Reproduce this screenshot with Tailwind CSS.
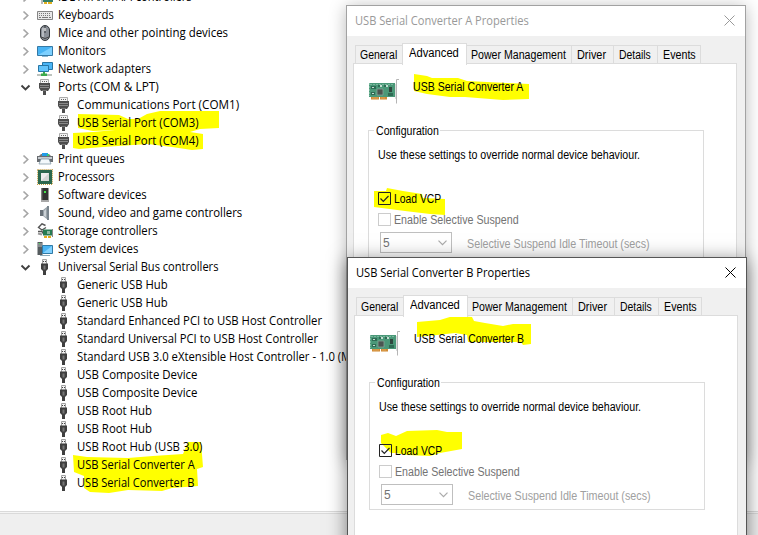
<!DOCTYPE html>
<html lang="en">
<head>
<meta charset="utf-8">
<title>Device Manager</title>
<script src="https://cdn.jsdelivr.net/npm/@tailwindcss/browser@4"></script>
</head>
<body class="w-[758px] h-[535px] overflow-hidden bg-white">
<svg class="hidden">
  <symbol id="collapsed" viewBox="0 0 16 16"><path d="M5.500 4.500L9.700 8.500L5.500 12.500" fill="none" stroke="#a6a6a6" stroke-width="1.700"/></symbol>
  <symbol id="expanded" viewBox="0 0 16 16"><path d="M3.500 6.500L7.500 10.500L11.500 6.500" fill="none" stroke="#404040" stroke-width="1.900"/></symbol>
  <symbol id="ide" viewBox="0 0 16 16"><path d="M6 4h10v9H6z" fill="#327e68"/><path d="M10 6h4v3h-4z" fill="#9ed0b8"/><path d="M7 13h3v2H7zM11 13h4v2h-4z" fill="#e0b020"/><path d="M5 3v12" stroke="#777"/></symbol>
  <symbol id="keyboard" viewBox="0 0 16 16"><path d="M.5 4.500h15v8H.5z" fill="#e8e8e8" stroke="#858585"/><path d="M2 6.500h12M2 8.500h12" stroke="#777" stroke-dasharray="1 1"/><path d="M2 10.500h2M5 10.500h6M12 10.500h2" stroke="#777"/></symbol>
  <symbol id="mouse" viewBox="0 0 16 16"><rect x="3.500" y=".5" width="9" height="15" rx="4.500" fill="#8b9098" stroke="#33373b"/><path d="M6 3v9" stroke="#c5c9ce" stroke-width="1.500"/><path d="M8 1v7" stroke="#33373b"/><path d="M8 3v3" stroke="#ddd" stroke-width="1.500"/><path d="M4 12q4 3 8 0" stroke="#444" fill="none"/></symbol>
  <symbol id="monitor" viewBox="0 0 16 16"><path d="M.5 3.500h15v9H.5z" fill="#49b4f4" stroke="#3579a5"/><path d="M1 12L15 4v8z" fill="#7dd0ff"/><path d="M5 13.500h6" stroke="#8bb9d4"/></symbol>
  <symbol id="network" viewBox="0 0 16 16"><path d="M5.500 1.500h10v7h-10z" fill="#4bb6f7" stroke="#2776a5"/><path d="M1.500 4.500h10v6h-10z" fill="#62c4fb" stroke="#2776a5"/><path d="M0 14h15" stroke="#bcc3be" stroke-width="2"/><path d="M4 12.500h6v2.500H4zM6 11h2v2H6z" fill="#3caa4c"/></symbol>
  <symbol id="port" viewBox="0 0 16 16"><path d="M3.500.5h8v4h-8z" fill="#f2f2f2" stroke="#aaa"/><path d="M5 2.500h6" stroke="#666" stroke-dasharray="1 1"/><path d="M2 4h11v5l-2 3H9v4H6v-4H4L2 9z" fill="#4d4d4d"/><path d="M3 6.500h9M3 8.500h9" stroke="#898989"/><path d="M5 11.500h5" stroke="#777"/></symbol>
  <symbol id="printer" viewBox="0 0 16 16"><path d="M2 5l2-2h8l2 2z" fill="#777"/><path d="M5 2h6v3H5z" fill="#229be8"/><path d="M10 3h2v2h-2z" fill="#38c76f"/><path d="M0 5h16v6H0z" fill="#686c70"/><path d="M1 6h14v2H1z" fill="#c6cbd0"/><path d="M4 8h8l2 5H2z" fill="#f3f8fb" stroke="#77909f" stroke-width=".7"/></symbol>
  <symbol id="cpu" viewBox="0 0 16 16"><path d="M.6.6h14.800v14.800H.6z" fill="none" stroke="#bf9a3e" stroke-width="1.200" stroke-dasharray="1 1"/><path d="M1 1h14v14H1z" fill="#2c684f"/><path d="M4 4h8v8H4z" fill="#d4d7d6"/><path d="M4 12L12 4H4z" fill="#eee"/></symbol>
  <symbol id="software" viewBox="0 0 16 16"><path d="M4.500 1h7v12h-7z" fill="#333"/><path d="M4 13h8v2H4z" fill="#a8a8a8"/><path d="M7 4h2v2H7z" fill="#46e24b"/><path d="M5 1v12" stroke="#666"/></symbol>
  <symbol id="speaker" viewBox="0 0 16 16"><path d="M3 5h3v6H3z" fill="#6a7279"/><path d="M6 5l5-4v14l-5-4z" fill="#9aa3aa"/><path d="M10 1h2v14h-2z" fill="#7b868e"/><path d="M7 6l2-2v8l-2-1z" fill="#cbd1d5"/></symbol>
  <symbol id="storage" viewBox="0 0 16 16"><path d="M8.500 2.500L5 .8L1.500 4.500L5 7L9 4.500M1 8.500h4l2 3" fill="none" stroke="#555" stroke-width="1.400"/><path d="M1 10.500l4 1" stroke="#999" stroke-width="2"/><path d="M6 6.500h9v6H6z" fill="#267b52"/><path d="M10 8h3v3h-3z" fill="#88b8a0"/><path d="M7 13h3v2H7zM11 13h3v2h-3z" fill="#e3ac20"/><path d="M15.500 6v8" stroke="#888"/></symbol>
  <symbol id="system" viewBox="0 0 16 16"><path d="M.5 1h5v13h-5z" fill="#555b5e"/><path d="M1 3h4M1 5h4" stroke="#b6babc"/><path d="M2 2h1v1H2z" fill="#43df55"/><path d="M5.500 4.500h10v8h-10z" fill="#4ab4f3" stroke="#317ba6"/><path d="M6 12l9-7v7z" fill="#83d2ff"/><path d="M3 14.500h10" stroke="#8caab9"/></symbol>
  <symbol id="usb" viewBox="0 0 16 16"><path d="M5.500.5h4v5h-4z" fill="#f1f1f1" stroke="#a2a2a2"/><path d="M6 2.500h1M8 2.500h1" stroke="#444"/><path d="M4 4.500h7v5.500l-2 2v4H6v-4l-2-2z" fill="#3f3f3f"/><path d="M6.500 6.500h2v4h-2z" fill="#777"/></symbol>
  <symbol id="card" viewBox="0 0 32 28"><path d="M1 4h26v14H1z" fill="#4a9878"/><path d="M1.500 4v13M2 5.500h24" stroke="#79b79d" stroke-dasharray="2 1"/><path d="M3 7h5v3H3zM10 6h3v2h-3zM16 6h3v2h-3zM3 13h4v3H3zM20 14h5v3h-5z" fill="#2f6b54"/><path d="M4 8h2v1H4zM12 6h2v2h-2zM18 6h2v2h-2zM22 9h1v4h-1zM4 14h2v1H4z" fill="#c4ddd1"/><path d="M9 10h6v6H9z" fill="#4a5550" stroke="#86a398" stroke-width=".8"/><path d="M21 8h3v5h-3z" fill="#2f473e"/><path d="M3 18h8v2.500H3zM12 18h7v2.500h-7z" fill="#cf8a35"/><path d="M5 18v2.500M7 18v2.500M9 18v2.500M14 18v2.500M16 18v2.500" stroke="#edbb70" stroke-width=".6"/><path d="M31 .5h-2.500v24" fill="none" stroke="#b5b5b5"/><path d="M27.500 5v15" stroke="#ddd"/></symbol>
</svg>

<main class="relative w-[758px] h-[535px] overflow-hidden bg-white">
  <svg class="absolute inset-0" width="758" height="535" fill="#ffff00">
    <path d="M78 114L119 115L128 119H138L147 114L160 111H219V128L200 129L190 132L203 134V149L192 150L172 147L148 144L103 147L79 149L73 148V133L93 132L115 130L93 131L78 128Z"/>
    <path d="M73 455L87 457L128 458L153 456L183 454L188 442H201L203 467L197 469L198 486L172 488L162 491L128 490L109 493L90 492L84 488V476L74 472Z"/>
  </svg>
  <div class="relative flex h-full flex-col">
    <ul id="tree" class="-mt-3 h-[523px] shrink-0"></ul>
    <div class="h-[3px] shrink-0 border-y border-[#dadada] bg-[#f5f5f5]"></div>
    <footer class="grow bg-[#efefef]"></footer>
  </div>
  <div id="windows"></div>
</main>

<script>
const tree = [
  [0,'ide','IDE ATA/ATAPI controllers',134],[0,'keyboard','Keyboards',55.500],[0,'mouse','Mice and other pointing devices',170],
  [0,'monitor','Monitors',48.500],[0,'network','Network adapters',93.500],[1,'port','Ports (COM & LPT)',100.500],
  [2,'port','Communications Port (COM1)',162],[2,'port','USB Serial Port (COM3)',122],[2,'port','USB Serial Port (COM4)',122],
  [0,'printer','Print queues',66.500],[0,'cpu','Processors',56.500],[0,'software','Software devices',88.500],
  [0,'speaker','Sound, video and game controllers',184],[0,'storage','Storage controllers',99.500],[0,'system','System devices',80.500],
  [1,'usb','Universal Serial Bus controllers',160],[2,'usb','Generic USB Hub',90.500],[2,'usb','Generic USB Hub',90.500],
  [2,'usb','Standard Enhanced PCI to USB Host Controller',245],[2,'usb','Standard Universal PCI to USB Host Controller',241],
  [2,'usb','Standard USB 3.0 eXtensible Host Controller - 1.0 (M',274],[2,'usb','USB Composite Device',120],[2,'usb','USB Composite Device',120],
  [2,'usb','USB Root Hub',75],[2,'usb','USB Root Hub',75],[2,'usb','USB Root Hub (USB 3.0)',125],
  [2,'usb','USB Serial Converter A',118],[2,'usb','USB Serial Converter B',117.500]
];
const esc = s => s.replace('&', '&amp;');
const label = (text, width) => `<span class="inline-block shrink-0 origin-left whitespace-nowrap" data-w="${width}">${esc(text)}</span>`;
document.getElementById('tree').innerHTML = tree.map(([kind, icon, text, w]) => `
  <li class="flex h-[18px] items-center text-[12px] leading-[18px] text-black font-['Open_Sans',sans-serif] ${kind === 2 ? 'pl-[56px]' : 'pl-[18px]'}">
    ${kind === 2 ? '' : `<svg class="size-4 mr-[3px] shrink-0"><use href="#${kind ? 'expanded' : 'collapsed'}"/></svg>`}
    <svg class="size-4 mr-[5px] shrink-0"><use href="#${icon}"/></svg>${label(text, w)}
  </li>`).join('');

const tab = (text, w, cls) => `<div class="flex items-center border border-b-0 border-[#dcdcdc] ${cls}">${label(text, w)}</div>`;
const dialog = d => `
<section class="absolute border text-[12px] text-black font-['Liberation_Sans',Arial,sans-serif] bg-[#f0f0f0] ${d.frame}">
  <header class="flex h-[30px] items-center justify-between bg-white pl-2 pr-[10px] font-['Open_Sans',sans-serif] ${d.titleColor}">
    ${label(d.name + ' Properties', 174)}
    <svg class="size-[11px] mb-[2px]" viewBox="0 0 11 11"><path d="M.5.5l10 10M10.500.5l-10 10" stroke="currentColor" stroke-width="1"/></svg>
  </header>
  <div class="flex h-[28px] items-end pl-2">
    ${tab('General', 37.5, 'h-[19px] w-[47px] border-r-0 pl-[4px]')}
    ${tab('Advanced', 49.5, 'relative z-10 w-[65px] h-[22px] -mb-px pb-[3px] bg-white pl-[6px]')}
    ${tab('Power Management', 94.5, 'h-[19px] w-[104px] border-x-0 pl-1')}
    ${tab('Driver', 29, 'h-[19px] w-[42px] border-r-0 pl-[5px]')}
    ${tab('Details', 32, 'h-[19px] w-[44px] border-r-0 pl-[5px]')}
    ${tab('Events', 33, 'h-[19px] w-[44px] pl-[5px]')}
  </div>
  <div class="relative -mt-px ml-[6px] h-[380px] w-[384px] border border-[#dcdcdc] bg-white">
    <svg class="absolute -left-2 -top-[59px]" width="400" height="455" viewBox="${d.x} ${d.y} 400 455" fill="#ffff00"><path d="${d.titleMark}"/><path d="${d.loadMark}"/></svg>
    <div class="relative flex h-[66px] pl-[14px] pt-[15px]">
      <svg class="h-7 w-8 mr-[13px] shrink-0"><use href="#card"/></svg>
      <div class="leading-4">${label(d.name, 110)}</div>
    </div>
    <fieldset class="relative ml-[14px] h-[128px] w-[336px] border border-[#dcdcdc]">
      <div class="-mt-2 ml-[5px] h-4 w-[66px] bg-white pl-[2px] leading-4">${label('Configuration', 62.5)}</div>
      <div class="mt-2 pl-[9px] leading-4">${label('Use these settings to override normal device behaviour.', 262.5)}</div>
      <div class="mt-[28px] flex h-4 items-center pl-[9px]">
        <svg class="size-[13px] mr-[3px] mb-px" viewBox="0 0 13 13" fill="none" stroke="#222"><path d="M.5.5h12v12H.5z"/><path d="M2.500 6.500l2.800 2.800L10.500 4" stroke-width="1.200"/></svg>${label('Load VCP', 47.5)}
      </div>
      <div class="mt-[5px] flex h-4 items-center pl-[9px] text-[#737373]">
        <span class="mr-[3px] mb-px size-[13px] border border-[#cccccc] bg-white"></span>${label('Enable Selective Suspend', 124.5)}
      </div>
      <div class="mt-1 flex h-[21px] items-center pl-[11px]">
        <div class="mr-[15px] flex h-[21px] w-[72px] items-center justify-between border border-[#bfbfbf] bg-white pl-[2px] pr-[4px] text-[#737373]">
          ${label('5', 7)}<svg class="h-[6px] w-[9px]" viewBox="0 0 9 6"><path d="M.5.7l4 4l4-4" fill="none" stroke="#aaa" stroke-width="1.200"/></svg>
        </div>
        <div class="pt-[2px] text-[#a0a0a0]">${label('Selective Suspend Idle Timeout (secs)', 182.5)}</div>
      </div>
    </fieldset>
  </div>
</section>`;
document.getElementById('windows').innerHTML = [
  {name:'USB Serial Converter A', x:346, y:5, frame:'left-[346px] top-[5px] w-[400px] h-[455px] border-[#a2a2a2] shadow-[0_2px_16px_rgba(0,0,0,0.28)]', titleColor:'text-[#999999]',
   titleMark:'M414 74L427 76L432 78H458L467 81L507 83L529 84V99L503 100L465 97H450L427 94L414 91Z',
   loadMark:'M374 191H386L387 188L403 191L422 194L423 198L445 199V215L430 214L405 211L374 207Z'},
  {name:'USB Serial Converter B', x:347, y:257, frame:'left-[347px] top-[257px] w-[400px] h-[455px] border-[#555555] shadow-[0_3px_18px_rgba(0,0,0,0.5)]', titleColor:'text-black',
   titleMark:'M417 322L440 320L453 316L472 317L474 321L485 323L503 326L513 324H531V344L523 345L521 342H468L467 335L455 333L437 335L417 337Z',
   loadMark:'M381 435L388 433L396 436L407 431L437 430L447 432H462V449L440 453L430 456L407 455L395 453H391L381 443Z'}
].map(dialog).join('');

const fit = el => { if (el.offsetWidth) el.style.transform = `scaleX(${el.dataset.w / el.offsetWidth})`; };
const labels = document.querySelectorAll('[data-w]');
const observer = new ResizeObserver(entries => entries.forEach(e => fit(e.target)));
labels.forEach(el => observer.observe(el));
addEventListener('load', () => labels.forEach(fit));
</script>
</body>
</html>
